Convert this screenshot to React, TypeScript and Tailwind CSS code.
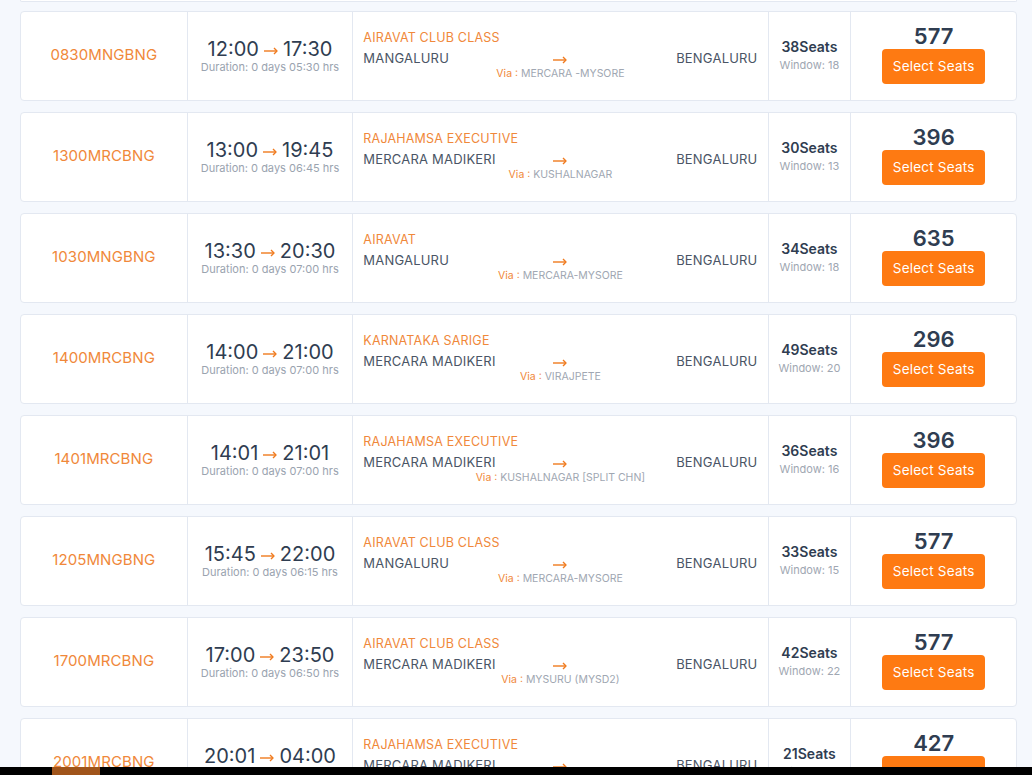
import React from "react";

type Trip = {
  code: string;
  dep: string;
  arr: string;
  duration: string;
  bus: string;
  from: string;
  via: string;
  seats: number;
  window: number;
  fare: number;
};

const trips: Trip[] = [
  { code: "0830MNGBNG", dep: "12:00", arr: "17:30", duration: "05:30", bus: "AIRAVAT CLUB CLASS", from: "MANGALURU", via: "MERCARA -MYSORE", seats: 38, window: 18, fare: 577 },
  { code: "1300MRCBNG", dep: "13:00", arr: "19:45", duration: "06:45", bus: "RAJAHAMSA EXECUTIVE", from: "MERCARA MADIKERI", via: "KUSHALNAGAR", seats: 30, window: 13, fare: 396 },
  { code: "1030MNGBNG", dep: "13:30", arr: "20:30", duration: "07:00", bus: "AIRAVAT", from: "MANGALURU", via: "MERCARA-MYSORE", seats: 34, window: 18, fare: 635 },
  { code: "1400MRCBNG", dep: "14:00", arr: "21:00", duration: "07:00", bus: "KARNATAKA SARIGE", from: "MERCARA MADIKERI", via: "VIRAJPETE", seats: 49, window: 20, fare: 296 },
  { code: "1401MRCBNG", dep: "14:01", arr: "21:01", duration: "07:00", bus: "RAJAHAMSA EXECUTIVE", from: "MERCARA MADIKERI", via: "KUSHALNAGAR [SPLIT CHN]", seats: 36, window: 16, fare: 396 },
  { code: "1205MNGBNG", dep: "15:45", arr: "22:00", duration: "06:15", bus: "AIRAVAT CLUB CLASS", from: "MANGALURU", via: "MERCARA-MYSORE", seats: 33, window: 15, fare: 577 },
  { code: "1700MRCBNG", dep: "17:00", arr: "23:50", duration: "06:50", bus: "AIRAVAT CLUB CLASS", from: "MERCARA MADIKERI", via: "MYSURU (MYSD2)", seats: 42, window: 22, fare: 577 },
  { code: "2001MRCBNG", dep: "20:01", arr: "04:00", duration: "07:59", bus: "RAJAHAMSA EXECUTIVE", from: "MERCARA MADIKERI", via: "KUSHALNAGAR", seats: 21, window: 14, fare: 427 },
];

// thin orange arrow used between times and between the cities
function Arrow({ w }: { w: number }) {
  return (
    <svg width={w} height="8" viewBox={`0 0 ${w} 8`} fill="none" stroke="#f07a1e" strokeWidth="1.4">
      <path d={`M0 4H${w - 1}`} />
      <path d={`M${w - 4} 1L${w - 1} 4L${w - 4} 7`} strokeLinejoin="round" />
    </svg>
  );
}

function TripCard({ trip }: { trip: Trip }) {
  return (
    <li className="flex h-[90px] rounded-[4px] border border-[#e3e8f1] bg-white">
      <div className="flex w-[166px] items-center justify-center pb-[2px] text-[15px] tracking-[0.1px] text-[#f0883a]">
        {trip.code}
      </div>
      <div className="flex w-[166px] flex-col items-center justify-center border-l border-[#e3e8f1] pb-[2px]">
        <div className="flex items-center text-[20px] leading-[23px] text-[#2f3d51]">
          {trip.dep}
          <span className="mx-[5px] mt-[3px]">
            <Arrow w={14} />
          </span>
          {trip.arr}
        </div>
        <div className="text-[11px] leading-[12px] text-[#9aa3af]">
          Duration: 0 days {trip.duration} hrs
        </div>
      </div>
      <div className="flex w-[416px] flex-col justify-center border-l border-[#e3e8f1] px-[10px] pb-[2px]">
        <div className="text-[12.5px] leading-[18px] tracking-[0.2px] text-[#f0883a]">{trip.bus}</div>
        <div className="mt-[2px] grid grid-cols-[1fr_auto_1fr] items-center text-[13px] leading-[18px] tracking-[0.2px] text-[#4a5565]">
          <span>{trip.from}</span>
          <span className="mt-[4px]">
            <Arrow w={14} />
          </span>
          <span className="justify-self-end">BENGALURU</span>
        </div>
        <div className="text-center text-[10.5px] leading-[14px] text-[#a0a7b2]">
          <span className="text-[#f0883a]">Via :</span> {trip.via}
        </div>
      </div>
      <div className="flex w-[83px] flex-col items-center justify-center border-l border-[#e3e8f1] pb-[2px]">
        <div className="text-[14px] font-semibold leading-[20px] text-[#2f3d51]">{trip.seats}Seats</div>
        <div className="text-[11px] leading-[16px] text-[#a0a7b2]">Window: {trip.window}</div>
      </div>
      <div className="flex w-[166px] flex-col items-center justify-center border-l border-[#e3e8f1] pb-[4px]">
        <div className="mb-[1px] text-[22px] font-semibold leading-[23px] text-[#2f3d51]">{trip.fare}</div>
        <button className="h-[35px] w-[103px] rounded-[4px] bg-[#fe7a12] text-[13.5px] tracking-[0.2px] text-white">
          Select Seats
        </button>
      </div>
    </li>
  );
}

export default function App() {
  return (
    <main
      className="h-screen overflow-hidden bg-[#f5f8fd] pl-[20px] pr-[15px]"
      style={{ fontFamily: "Inter, 'Open Sans', sans-serif" }}
    >
      <div className="h-[2px] rounded-b-[4px] border-x border-b border-[#e3e8f1] bg-white" />
      <ul className="mt-[9px] flex flex-col gap-[11px] pb-[20px]">
        {trips.map((t) => (
          <TripCard key={t.code} trip={t} />
        ))}
      </ul>
      <div className="fixed bottom-0 left-0 right-0 h-[8px] bg-black">
        <div className="ml-[52px] h-full w-[48px] bg-[#a0541a]" />
      </div>
    </main>
  );
}
